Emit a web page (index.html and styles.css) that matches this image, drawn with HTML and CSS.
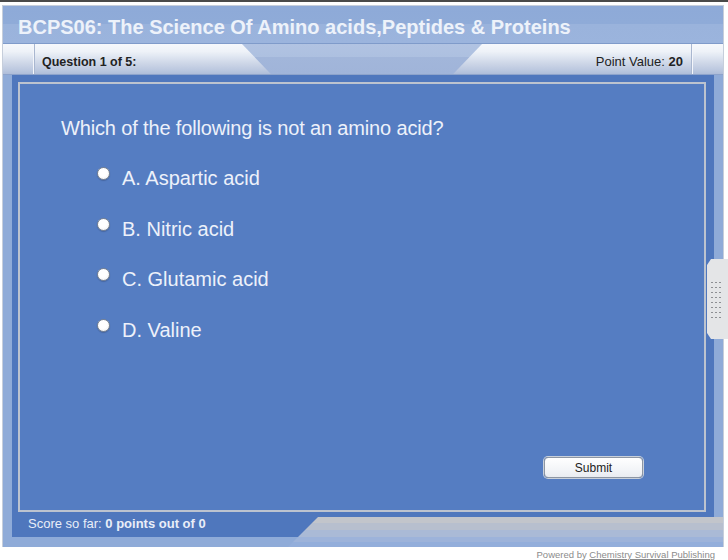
FILE: index.html
```html
<!DOCTYPE html>
<html>
<head>
	<meta charset="utf-8" />
	<title>BCPS06 Quiz</title>
	<link rel="stylesheet" href="styles.css">
</head>
<body>
<div class="topline"></div>

<div class="frame">
	<div class="title">BCPS06: The Science Of Amino acids,Peptides &amp; Proteins</div>

	<div class="tabs">
		<div class="tab-cap"></div>
		<div class="tab-q">Question 1 of 5:</div>
		<div class="tab-mid"></div>
		<div class="tab-pts">Point Value: <b>20</b></div>
		<div class="tab-cap tab-cap-r"></div>
	</div>

	<div class="stage">
		<div class="card">
			<p class="question">Which of the following is not an amino acid?</p>
			<ul class="options">
				<li><span class="radio"></span>A. Aspartic acid</li>
				<li><span class="radio"></span>B. Nitric acid</li>
				<li><span class="radio"></span>C. Glutamic acid</li>
				<li><span class="radio"></span>D. Valine</li>
			</ul>
			<div class="actions"><button class="submit">Submit</button></div>
		</div>
		<div class="score">Score so far: <b>0 points out of 0</b></div>
	</div>

	<!-- decorations over the frame edge -->
	<div class="foot-tab"></div>
	<div class="handle"><div class="grip"></div></div>
</div>

<div class="powered">Powered by <a href="#">Chemistry Survival Publishing</a></div>
</body>
</html>
```

FILE: styles.css
```css
* {
  box-sizing: border-box;
}

body {
  margin: 0;
  background: #fff;
  font-family: "Liberation Sans", Arial, sans-serif;
}

.topline {
  height: 2px;
  background: #4a4a4a;
}

.frame {
  position: relative;
  width: 722px;
  margin: 3px 0 0 2px;
  border: 1px solid #c6cedb;
  border-bottom: 0;
  background: #8fabd8;
  padding-bottom: 10px;
}

/* title bar */
.title {
  height: 38px;
  padding: 5px 0 0 15px;
  line-height: 32px;
  font-size: 20px;
  font-weight: bold;
  color: #edf2fa;
  white-space: nowrap;
  background: linear-gradient(#8eaad8 0, #8fabd8 50%, #9ab3dc 50%, #9bb4dd 100%);
  border-bottom: 1px solid #7f9bca;
}

/* question tab strip */
.tabs {
  display: flex;
  height: 31px;
  background: linear-gradient(#f6f8fc 0, #eef2f8 25%, #dde4f0 45%, #cdd6e7 65%, #bdc9e0 85%, #aebdd9 100%);
  border-bottom: 1px solid #8da3cb;
  font-size: 13px;
  color: #222;
}

.tab-cap {
  width: 31px;
  border-right: 1px solid #f4f6fb;
  box-shadow: 1px 0 0 #a9b7d0;
}

.tab-cap-r {
  width: 30px;
  border-right: 0;
  border-left: 1px solid #f4f6fb;
  box-shadow: -1px 0 0 #a9b7d0;
}

.tab-q {
  width: 208px;
  padding: 4px 0 0 8px;
  line-height: 28px;
  font-size: 12.5px;
  font-weight: bold;
  white-space: nowrap;
}

.tab-mid {
  width: 240px;
  background: linear-gradient(#b1c3e2 0, #adc0e0 45%, #a2b6da 45%, #a0b4d9 100%);
  clip-path: polygon(0 0, 100% 0, 88% 100%, 12% 100%);
}

.tab-pts {
  width: 210px;
  padding: 4px 9px 0 0;
  line-height: 28px;
  text-align: right;
  white-space: nowrap;
}

/* blue question area */
.stage {
  margin: 0 9px 0 9px;
  padding: 7px 8px 0 6px;
  background: #4f77bd;
}

.card {
  display: flex;
  flex-direction: column;
  height: 430px;
  padding: 32px 61px 32px 41px;
  background: #557dc2;
  border: 2px solid #bcc3cf;
  color: #edf1fa;
}

.question {
  margin: 0;
  font-size: 20px;
  line-height: 24px;
  letter-spacing: -0.15px;
}

.options {
  list-style: none;
  margin: 26px 0 0 36px;
  padding: 0;
  display: flex;
  flex-direction: column;
  gap: 26.5px;
}

.options li {
  display: flex;
  align-items: flex-start;
  gap: 12px;
  height: 24px;
  font-size: 20px;
  line-height: 24px;
}

.radio {
  width: 13px;
  height: 13px;
  margin-top: 1px;
  border-radius: 50%;
  border: 1px solid #7c8490;
  background: radial-gradient(circle at 45% 40%, #fff 0, #fff 45%, #e8e8e8 100%);
  box-shadow: 0 1px 1px rgba(40, 60, 100, 0.35);
}

.actions {
  margin-top: auto;
  display: flex;
  justify-content: flex-end;
}

.submit {
  width: 99px;
  height: 21px;
  padding: 0;
  font-family: "Liberation Sans", Arial, sans-serif;
  font-size: 12px;
  color: #222;
  background: linear-gradient(#ffffff, #f3f5f8 60%, #e9ecf1);
  border: 1px solid #8d96a3;
  border-radius: 4px;
  box-shadow: 0 0 0 1px #c9d0da;
}

.score {
  height: 25px;
  padding-left: 10px;
  font-size: 13px;
  line-height: 24px;
  color: #e9eef8;
}

/* bottom right band, lies over the frame edge */
.foot-tab {
  position: absolute;
  left: 285px;
  right: 0;
  bottom: 0;
  height: 30px;
  background: linear-gradient(#c2c5cb 0 6px, #b7bfce 6px 13px, #aabad6 13px 20px, #9db3da 20px 25px, #93aedb 25px);
  clip-path: polygon(30px 0, 100% 0, 100% 100%, 0 100%);
}

/* side grip */
.handle {
  position: absolute;
  left: 704px;
  top: 253px;
  width: 21px;
  height: 80px;
  background: #e4e5e7;
  clip-path: polygon(4px 0, 100% 0, 100% 100%, 4px 100%, 0 calc(100% - 6px), 0 6px);
}

.grip {
  margin: 21px 0 0 3px;
  width: 12px;
  height: 40px;
  background: radial-gradient(circle, #8d8f93 0.9px, transparent 1.1px) 0 0 / 4px 5px;
}

.powered {
  padding: 2px 13px 0 0;
  text-align: right;
  font-size: 9.5px;
  line-height: 12px;
  color: #8c8c8c;
}

.powered a {
  color: #8c8c8c;
  text-decoration: underline;
}
```
